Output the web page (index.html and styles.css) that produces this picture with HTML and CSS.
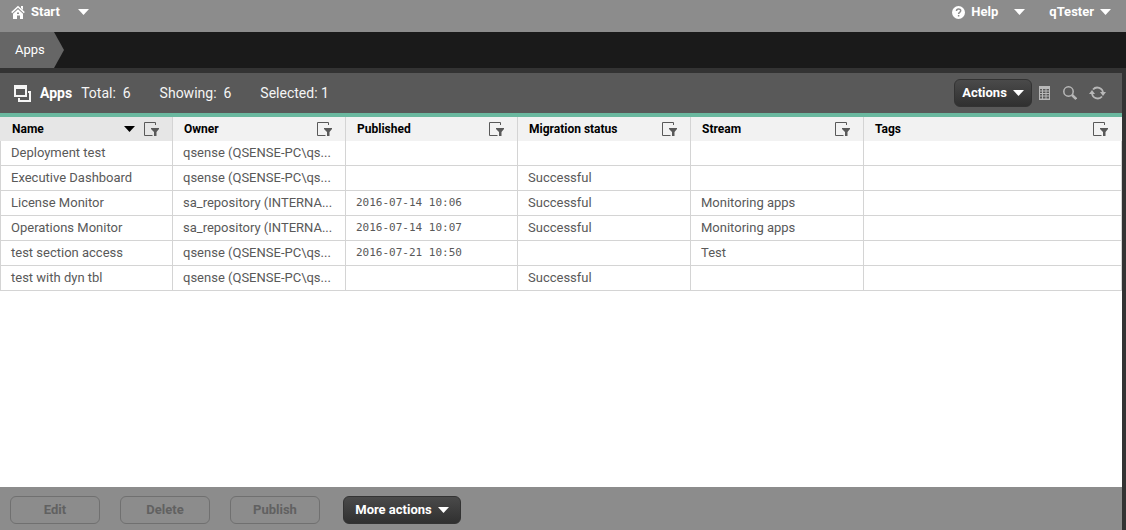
FILE: index.html
```
<!DOCTYPE html>
<html lang="en">
<head>
<meta charset="utf-8">
<title>Apps</title>
<link rel="stylesheet" href="styles.css">
</head>
<body>
<svg class="sprite" aria-hidden="true">
  <symbol id="caret" viewBox="0 0 11 6"><path d="M0 0h11L5.500 6z" fill="currentColor"/></symbol>
  <symbol id="filter" viewBox="0 0 15 14"><path d="M11.500 3V.5H.5v13h8" fill="none" stroke="currentColor"/><path d="M7 6h8v1l-2.500 3v4h-2.500v-4L7 7z" fill="currentColor"/></symbol>
</svg>
<header class="topbar">
  <button class="nav nav-start"><svg class="home" viewBox="0 0 14 14"><path d="M.7 7.600 7 1.700l6.300 5.900" fill="none" stroke="currentColor" stroke-width="1.500"/><path d="M10 1h2v4l-2-2zM2 8.800 7 4.300l5 4.500V14H9v-3.500H6V14H2z" fill="currentColor"/><path d="M6 7.500h2V9H6z" fill="#8c8c8c"/></svg><span>Start</span><svg class="caret"><use href="#caret"/></svg></button>
  <div class="topbar-right">
    <button class="nav nav-help"><svg class="help" viewBox="0 0 13 13"><circle cx="6.500" cy="6.500" r="6.500" fill="currentColor"/><path d="M4.500 5c0-2.700 4.200-2.600 4.200-.2 0 1.500-2.100 1.500-2.100 3.100M6.600 9v1.500" fill="none" stroke="#8c8c8c" stroke-width="1.500"/></svg><span>Help</span><svg class="caret"><use href="#caret"/></svg></button>
    <button class="nav nav-user"><span>qTester</span><svg class="caret"><use href="#caret"/></svg></button>
  </div>
</header>
<nav class="crumbs"><a class="crumb" href="#">Apps</a></nav>
<main class="panel">
  <div class="toolbar">
    <svg class="apps" viewBox="0 0 17 17"><path d="M0 0h13v12H0zM2 4v6h9V4z" fill="currentColor" fill-rule="evenodd"/><path d="M14 6h3v11H4v-4h2v2h9V8h-1z" fill="currentColor"/></svg>
    <h1>Apps</h1>
    <span class="total">Total: &nbsp;6</span><span class="showing">Showing: &nbsp;6</span><span>Selected: 1</span>
    <div class="tools">
      <button class="dark actions">Actions<svg class="caret"><use href="#caret"/></svg></button>
      <button class="tool" aria-label="Columns"><svg class="grid" viewBox="0 0 11 14"><path d="M0 0h11v14H0zM1 3v1.500h2V3zM4 3v1.500h2.500V3zM7.500 3v1.500H10V3zM1 5.500V7h2V5.500zM4 5.500V7h2.500V5.500zM7.500 5.500V7H10V5.500zM1 8v1.500h2V8zM4 8v1.500h2.500V8zM7.500 8v1.500H10V8zM1 10.500V12.500h2V10.500zM4 10.500V12.500h2.500V10.500zM7.500 10.500V12.500H10V10.500z" fill="currentColor" fill-rule="evenodd"/></svg></button>
      <button class="tool" aria-label="Search"><svg class="search" viewBox="0 0 14 14"><circle cx="5.500" cy="5.500" r="4.700" fill="none" stroke="currentColor" stroke-width="1.500"/><path d="m9 9 4.300 4" stroke="currentColor" stroke-width="2.600"/></svg></button>
      <button class="tool" aria-label="Refresh"><svg class="refresh" viewBox="0 0 17 14"><path d="M4 3.500A5.700 5.700 0 0 1 14 7M13 10.500A5.700 5.700 0 0 1 3 7" fill="none" stroke="currentColor" stroke-width="1.800"/><path d="M11 6h6l-3 4zM0 8h6L3 4z" fill="currentColor"/></svg></button>
    </div>
  </div>
  <div class="content">
    <table>
      <colgroup><col class="c1"><col class="c2"><col class="c3"><col class="c4"><col class="c5"><col></colgroup>
      <thead><tr>
        <th class="sorted"><div class="head"><span>Name</span><svg class="caret"><use href="#caret"/></svg><button aria-label="Filter name"><svg><use href="#filter"/></svg></button></div></th>
        <th><div class="head"><span>Owner</span><button aria-label="Filter owner"><svg><use href="#filter"/></svg></button></div></th>
        <th><div class="head"><span>Published</span><button aria-label="Filter published"><svg><use href="#filter"/></svg></button></div></th>
        <th><div class="head"><span>Migration status</span><button aria-label="Filter migration status"><svg><use href="#filter"/></svg></button></div></th>
        <th><div class="head"><span>Stream</span><button aria-label="Filter stream"><svg><use href="#filter"/></svg></button></div></th>
        <th><div class="head"><span>Tags</span><button aria-label="Filter tags"><svg><use href="#filter"/></svg></button></div></th>
      </tr></thead>
      <tbody>
        <tr><td>Deployment test</td><td>qsense (QSENSE-PC\qs...</td><td></td><td></td><td></td><td></td></tr>
        <tr><td>Executive Dashboard</td><td>qsense (QSENSE-PC\qs...</td><td></td><td>Successful</td><td></td><td></td></tr>
        <tr><td>License Monitor</td><td>sa_repository (INTERNA...</td><td class="date">2016-07-14 10:06</td><td>Successful</td><td>Monitoring apps</td><td></td></tr>
        <tr><td>Operations Monitor</td><td>sa_repository (INTERNA...</td><td class="date">2016-07-14 10:07</td><td>Successful</td><td>Monitoring apps</td><td></td></tr>
        <tr><td>test section access</td><td>qsense (QSENSE-PC\qs...</td><td class="date">2016-07-21 10:50</td><td></td><td>Test</td><td></td></tr>
        <tr><td>test with dyn tbl</td><td>qsense (QSENSE-PC\qs...</td><td></td><td>Successful</td><td></td><td></td></tr>
      </tbody>
    </table>
  </div>
  <footer class="footer">
    <button class="ghost" disabled>Edit</button>
    <button class="ghost" disabled>Delete</button>
    <button class="ghost" disabled>Publish</button>
    <button class="dark more">More actions<svg class="caret"><use href="#caret"/></svg></button>
  </footer>
</main>
</body>
</html>
```
FILE: styles.css
```
* { box-sizing: border-box; }
body {
  margin: 0;
  min-height: 100vh;
  display: flex;
  flex-direction: column;
  background: #333;
  color: #595959;
  font: 13px/16px Roboto, "Liberation Sans", sans-serif;
}
button { font: inherit; color: inherit; background: none; border: 0; padding: 0; }
svg { display: block; flex: none; }
.sprite { display: none; }
.caret { width: 11px; height: 6px; }

.topbar {
  height: 32px;
  padding: 4px 15px 12px 11px;
  display: flex;
  justify-content: space-between;
  background: #8c8c8c;
  color: #fff;
  font-weight: 700;
}
.topbar-right { display: flex; gap: 24px; }
.nav { display: flex; align-items: center; }
.nav-start { gap: 6px; }
.nav-start .caret { margin-left: 12px; }
.nav-help .caret { margin-left: 10px; }
.nav-help, .nav-user { gap: 6px; }
.home { width: 14px; height: 14px; }
.help { width: 13px; height: 13px; }

.crumbs { height: 36px; display: flex; background: #1a1a1a; }
.crumb {
  width: 64px;
  padding: 10px 0 0 15px;
  background: #666;
  color: #fff;
  text-decoration: none;
  clip-path: polygon(0 0, 54px 0, 100% 50%, 54px 100%, 0 100%);
}

.panel { flex: 1; margin: 5px 4px 0 0; display: flex; flex-direction: column; }
.toolbar {
  height: 44px;
  padding: 0 16px 0 14px;
  display: flex;
  align-items: center;
  background: #595959;
  border-bottom: 4px solid #6ab89f;
  color: #f5f5f5;
  font-size: 14px;
}
.toolbar h1 { margin: 0 9px 0 9px; font-size: 14px; color: #fff; }
.apps { width: 17px; height: 17px; }
.total, .showing { margin-right: 29px; }
.tools { margin-left: auto; display: flex; align-items: center; color: #b8b8b8; }
.dark {
  height: 28px;
  display: flex;
  align-items: center;
  justify-content: center;
  gap: 6px;
  border: 1px solid #333;
  border-radius: 6px;
  background: linear-gradient(#4a4a4a, #303030);
  color: #fff;
  font-weight: 700;
  font-size: 13px;
}
.actions { width: 78px; margin-right: 7px; }
.grid { width: 11px; height: 14px; }
.search { width: 14px; height: 14px; margin: 0 12px 0 13px; }
.refresh { width: 17px; height: 14px; }

.content { flex: 1; background: #fff; }
table { width: 100%; table-layout: fixed; border-collapse: separate; border-spacing: 0; }
.c1, .c2, .c4, .c5 { width: 173px; }
.c3 { width: 172px; }
th {
  height: 24px;
  padding: 0 13px 0 11px;
  background: #f2f2f2;
  border-right: 1px solid #d4d4d4;
  color: #000;
  font-size: 12px;
  text-align: left;
}
th:first-child { padding-left: 12px; }
th:last-child { border-color: #f2f2f2; }
.sorted { background: #e6e6e6; }
.head { display: flex; align-items: center; justify-content: space-between; }
.head .caret { margin: 0 9px 0 auto; }
.head button svg { width: 15px; height: 14px; color: #595959; }
td {
  height: 25px;
  padding: 0 10px;
  border: solid #d4d4d4;
  border-width: 0 1px 1px 0;
  white-space: nowrap;
  overflow: hidden;
}
td:first-child { border-left-width: 1px; }
.date { font: 11px/16px "DejaVu Sans Mono", monospace; }

.footer { height: 43px; padding: 9px 10px 0; display: flex; background: #8c8c8c; }
.ghost {
  width: 90px;
  height: 28px;
  margin-right: 20px;
  border: 1px solid #707070;
  border-radius: 6px;
  color: #616161;
  font-weight: 700;
}
.more { width: 118px; margin-left: 3px; }
```
